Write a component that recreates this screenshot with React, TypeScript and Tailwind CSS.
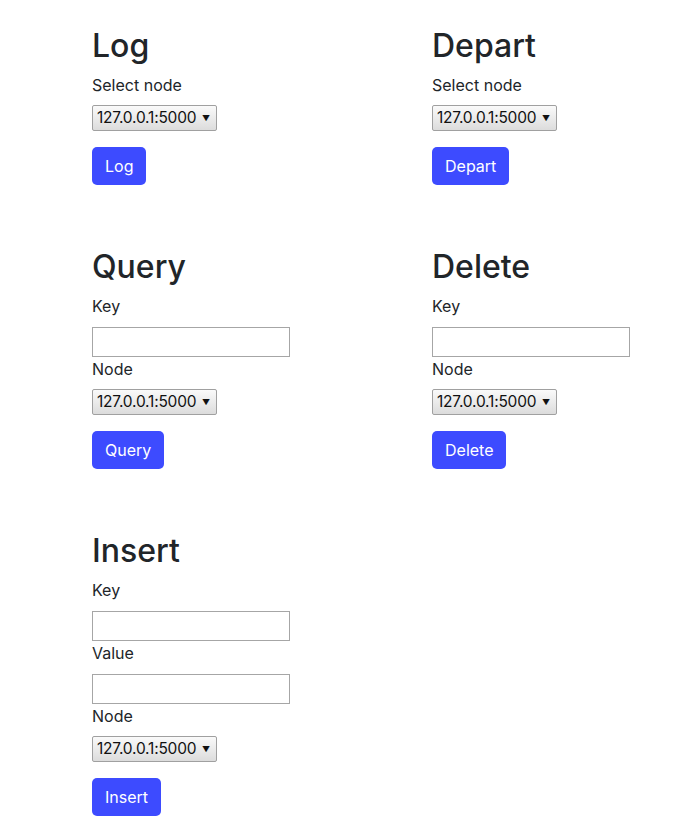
import React from "react";

const font = { fontFamily: "Inter, 'Noto Sans', sans-serif" };

function NodeSelect() {
  return (
    <div className="relative mt-[8px] flex h-[26px] w-[125px] items-center rounded-[2px] border border-[#a0a0a0] bg-gradient-to-b from-[#fafafa] to-[#dcdcdc] pl-[4px] text-[15.5px] tracking-[-0.2px] text-[#111]">
      <span>127.0.0.1:5000</span>
      <span className="absolute right-[6px] top-[6px] text-[8px]">▼</span>
    </div>
  );
}

function Field({ label }: { label: string }) {
  return (
    <>
      <label className="block text-[16px] leading-[24px]">{label}</label>
      <input className="mt-[9px] block h-[30px] w-[198px] border border-[#a6a6a6] bg-white px-1 outline-none" />
    </>
  );
}

function Section({
  title,
  fields = [],
  nodeLabel,
  button,
}: {
  title: string;
  fields?: string[];
  nodeLabel: string;
  button: string;
}) {
  return (
    <div className="pb-[63px]">
      <h2 className="mb-[8px] text-[32px] font-medium leading-[38px]">{title}</h2>
      {fields.map((f) => (
        <Field key={f} label={f} />
      ))}
      <label className="block text-[16px] leading-[24px]">{nodeLabel}</label>
      <NodeSelect />
      <button className="mt-[16px] block h-[38px] rounded-[5px] bg-[#3d4bff] px-[13px] text-[16px] text-white">
        {button}
      </button>
    </div>
  );
}

export default function App() {
  return (
    <div style={font} className="h-[830px] overflow-hidden bg-white pl-[92px] pt-[27px] text-[#212529]">
      <div className="grid grid-cols-[340px_1fr]">
        <Section title="Log" nodeLabel="Select node" button="Log" />
        <Section title="Depart" nodeLabel="Select node" button="Depart" />
        <Section title="Query" fields={["Key"]} nodeLabel="Node" button="Query" />
        <Section title="Delete" fields={["Key"]} nodeLabel="Node" button="Delete" />
        <Section title="Insert" fields={["Key", "Value"]} nodeLabel="Node" button="Insert" />
      </div>
    </div>
  );
}
